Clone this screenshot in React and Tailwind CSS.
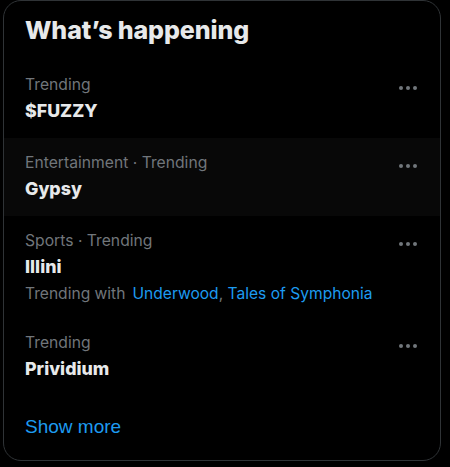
const trends = [
  { meta: "Trending", title: "$FUZZY" },
  { meta: "Entertainment · Trending", title: "Gypsy", hover: true },
  {
    meta: "Sports · Trending",
    title: "Illini",
    with: ["Underwood", "Tales of Symphonia"],
  },
  { meta: "Trending", title: "Prividium" },
];

function Dots() {
  return (
    <svg width="20" height="6" viewBox="0 0 20 6" className="text-[#71767b]">
      <circle cx="3" cy="3" r="2" fill="currentColor" />
      <circle cx="10" cy="3" r="2" fill="currentColor" />
      <circle cx="17" cy="3" r="2" fill="currentColor" />
    </svg>
  );
}

function TrendItem({ item }) {
  return (
    <div
      className={`relative px-[21px] pt-[14px] ${item.with ? "pb-[14px]" : "pb-[17px]"} ${
        item.hover ? "bg-[#080808]" : ""
      }`}
    >
      <div className="absolute right-[22px] top-[25px]">
        <Dots />
      </div>
      <div className="text-[15.7px] leading-[22px] text-[#71767b]">{item.meta}</div>
      <div className="mt-[5px] text-[17.8px] leading-[20px] font-extrabold text-[#e7e9ea]">
        {item.title}
      </div>
      {item.with && (
        <div className="mt-[7px] text-[15.6px] leading-[20px] text-[#71767b]">
          Trending with
          <span className="ml-[7px] text-[#1d9bf0]">{item.with[0]}</span>
          <span>, </span>
          <span className="text-[#1d9bf0]">{item.with[1]}</span>
        </div>
      )}
    </div>
  );
}

export default function App() {
  return (
    <div className="min-h-[467px] w-[450px] bg-black font-['Inter',sans-serif]">
      <div className="ml-[3px] w-[438px] h-[461px] rounded-[18px] border border-[#2f3336] overflow-hidden flex flex-col">
        <h2 className="px-[21px] pt-[14px] pb-[15px] text-[25px] leading-[30px] font-extrabold text-[#e7e9ea] tracking-[-0.1px]">
          What’s happening
        </h2>

        {trends.map((item) => (
          <TrendItem key={item.title} item={item} />
        ))}

        <div className="flex-1 flex items-center px-[21px] pb-[2px]">
          <span className="font-['Liberation_Sans',sans-serif] text-[19px] text-[#1d9bf0]">
            Show more
          </span>
        </div>
      </div>
    </div>
  );
}
